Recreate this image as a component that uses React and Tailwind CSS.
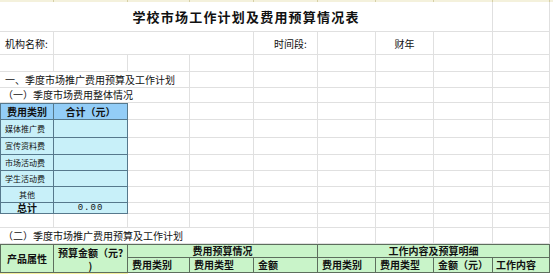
import React from 'react'

const g = 'border-r border-b border-[#e0e0e0]'

function Blank({ w }) {
  return <div className={`${w} h-full shrink-0 ${g}`}></div>
}

function GridRest() {
  // empty columns from 190 to the right edge
  return (
    <>
      <Blank w="w-[64px]" />
      <Blank w="w-[64px]" />
      <Blank w="w-[58px]" />
      <Blank w="w-[58px]" />
      <Blank w="w-[59px]" />
      <Blank w="w-[57px]" />
      <div className="flex-1 h-full"></div>
    </>
  )
}

function EmptyRow({ h }) {
  return (
    <div className={`flex ${h}`}>
      <Blank w="w-[54px]" />
      <Blank w="w-[74px]" />
      <Blank w="w-[62px]" />
      <GridRest />
    </div>
  )
}

const blueHead = 'bg-[#93cdf7] border-r border-b border-[#56788c] flex items-center justify-center font-bold text-[10px] leading-none'
const blueCell = 'bg-[#c8f0f9] border-r border-b border-[#56788c]'

function CostRow({ label, center, h }) {
  return (
    <div className={`flex ${h}`}>
      <div className={`w-[54px] shrink-0 ${blueCell} border-l flex items-center text-[8px] leading-none ${center ? 'justify-center' : 'pl-[4px]'}`}>
        {label}
      </div>
      <div className={`w-[74px] shrink-0 ${blueCell}`}></div>
      <Blank w="w-[62px]" />
      <GridRest />
    </div>
  )
}

const greenCell = 'bg-[#c9f4c9] border-r border-b border-[#5d6e5d] font-bold text-[10px] leading-none flex items-center'

export default function App() {
  return (
    <div className="w-[553px] h-[274px] overflow-hidden bg-white text-[#111] font-['Noto_Sans_CJK_SC','Liberation_Sans',sans-serif]">
      {/* header strip */}
      <div className="flex h-[2px] bg-[#f4f1dc]">
        <div className="w-[54px] border-r border-[#d6d0a6]"></div>
        <div className="w-[74px] border-r border-[#d6d0a6]"></div>
        <div className="w-[62px] border-r border-[#d6d0a6]"></div>
        <div className="w-[64px] border-r border-[#d6d0a6]"></div>
        <div className="w-[64px] border-r border-[#d6d0a6]"></div>
        <div className="w-[58px] border-r border-[#d6d0a6]"></div>
        <div className="w-[58px] border-r border-[#d6d0a6]"></div>
        <div className="w-[59px] border-r border-[#d6d0a6]"></div>
        <div className="w-[57px] border-r border-[#d6d0a6]"></div>
      </div>

      {/* title */}
      <div className="flex h-[30px]">
        <div className={`w-[493px] shrink-0 ${g} flex items-center justify-center text-[13px] font-bold tracking-[1.2px]`}>
          学校市场工作计划及费用预算情况表
        </div>
        <Blank w="w-[57px]" />
        <div className="flex-1"></div>
      </div>

      {/* org row */}
      <div className="flex h-[23px] text-[10px]">
        <div className={`w-[54px] shrink-0 ${g} flex items-center pl-[5px]`}>机构名称:</div>
        <Blank w="w-[200px]" />
        <div className={`w-[64px] shrink-0 ${g} flex items-center pl-[20px]`}>时间段:</div>
        <Blank w="w-[58px]" />
        <div className={`w-[58px] shrink-0 ${g} flex items-center justify-center`}>财年</div>
        <Blank w="w-[59px]" />
        <Blank w="w-[57px]" />
        <div className="flex-1"></div>
      </div>

      <EmptyRow h="h-[17px]" />

      {/* section one */}
      <div className="flex h-[16px]">
        <div className={`w-[190px] shrink-0 ${g} flex items-center pl-[5px] text-[10px] leading-none whitespace-nowrap`}>
          一、季度市场推广费用预算及工作计划
        </div>
        <GridRest />
      </div>
      <div className="flex h-[15px]">
        <div className={`w-[190px] shrink-0 ${g} flex items-center pl-[3px] text-[10px] leading-none whitespace-nowrap`}>
          （一）季度市场费用整体情况
        </div>
        <GridRest />
      </div>

      {/* blue table */}
      <div className="flex h-[17px]">
        <div className={`w-[54px] shrink-0 ${blueHead} border-l border-t`}>费用类别</div>
        <div className={`w-[74px] shrink-0 ${blueHead} border-t`}>合计（元）</div>
        <Blank w="w-[62px]" />
        <GridRest />
      </div>
      <CostRow label="媒体推广费" h="h-[18px]" />
      <CostRow label="宣传资料费" h="h-[17px]" />
      <CostRow label="市场活动费" h="h-[16px]" />
      <CostRow label="学生活动费" h="h-[16px]" />
      <CostRow label="其他" center h="h-[16px]" />
      <div className="flex h-[11px]">
        <div className={`w-[54px] shrink-0 ${blueCell} border-l flex items-center justify-center text-[10px] leading-none font-bold`}>总计</div>
        <div className={`w-[74px] shrink-0 ${blueCell} flex items-center justify-center text-[9px] leading-none tracking-[1px] font-['Liberation_Mono',monospace]`}>0.00</div>
        <Blank w="w-[62px]" />
        <GridRest />
      </div>

      <EmptyRow h="h-[14px]" />

      {/* section two */}
      <div className="flex h-[16px]">
        <div className={`w-[254px] shrink-0 ${g} flex items-center pl-[3px] text-[10px] leading-none whitespace-nowrap`}>
          （二）季度市场推广费用预算及工作计划
        </div>
        <Blank w="w-[64px]" />
        <Blank w="w-[58px]" />
        <Blank w="w-[58px]" />
        <Blank w="w-[59px]" />
        <Blank w="w-[57px]" />
        <div className="flex-1"></div>
      </div>

      {/* green table */}
      <div className="flex h-[29px]">
        <div className={`w-[54px] shrink-0 ${greenCell} border-l border-t justify-center`}>产品属性</div>
        <div className={`w-[74px] shrink-0 ${greenCell} border-t justify-center`}>
          <p className="text-center leading-[13px] whitespace-nowrap">
            预算金额（元?<br />)
          </p>
        </div>
        <div className="w-[422px] shrink-0 flex flex-col">
          <div className="flex h-[14px]">
            <div className={`w-[190px] shrink-0 ${greenCell} border-t justify-center`}>费用预算情况</div>
            <div className={`w-[232px] shrink-0 ${greenCell} border-t justify-center`}>工作内容及预算明细</div>
          </div>
          <div className="flex h-[15px]">
            <div className={`w-[62px] shrink-0 ${greenCell} pl-[4px]`}>费用类别</div>
            <div className={`w-[64px] shrink-0 ${greenCell} pl-[4px]`}>费用类型</div>
            <div className={`w-[64px] shrink-0 ${greenCell} pl-[4px]`}>金额</div>
            <div className={`w-[58px] shrink-0 ${greenCell} pl-[4px]`}>费用类别</div>
            <div className={`w-[58px] shrink-0 ${greenCell} pl-[4px]`}>费用类型</div>
            <div className={`w-[59px] shrink-0 ${greenCell} pl-[4px]`}>金额（元）</div>
            <div className={`w-[57px] shrink-0 ${greenCell} pl-[3px]`}>工作内容</div>
          </div>
        </div>
        <div className="flex-1"></div>
      </div>
      <div className="flex h-[1px]">
        <div className="w-[128px] bg-[#f3ee9c]"></div>
      </div>
    </div>
  )
}
